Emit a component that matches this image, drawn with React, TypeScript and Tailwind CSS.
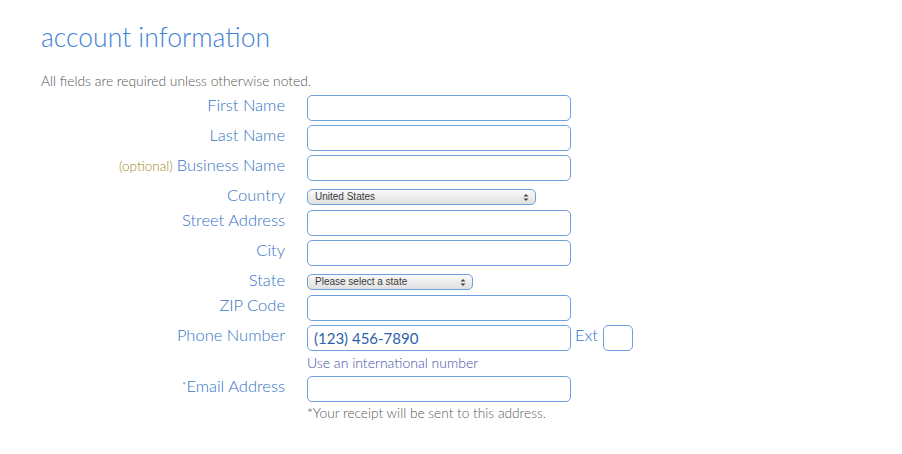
import React from 'react'

const font = { fontFamily: 'Lato, "Open Sans", sans-serif' }

function Label({ children, optional }: { children: React.ReactNode; optional?: boolean }) {
  return (
    <div className="w-[244px] shrink-0 text-right text-[16.5px] leading-[20px] font-light text-[#3474c6]">
      {optional && <span className="mr-1 text-[13.5px] text-[#9c8d22]">(optional)</span>}
      {children}
    </div>
  )
}

function TextRow({ label, optional, value, children }: { label: React.ReactNode; optional?: boolean; value?: string; children?: React.ReactNode }) {
  return (
    <div className="flex items-start gap-[22px] mb-[4px]">
      <Label optional={optional}>{label}</Label>
      <div className="flex items-start">
        <input
          readOnly
          value={value ?? ''}
          className="w-[264px] h-[26px] rounded-[5px] border border-[#6f9fdc] bg-white px-[6px] text-[15px] text-[#2f62aa] outline-none"
          style={font}
        />
        {children}
      </div>
    </div>
  )
}

function SelectRow({ label, value, width }: { label: string; value: string; width: string }) {
  return (
    <div className="flex items-start gap-[22px] mb-[4px] h-[21px]">
      <Label>{label}</Label>
      <div
        className={`${width} mt-[4px] h-[16px] rounded-[5px] border border-[#6f9fdc] bg-gradient-to-b from-[#fafafa] to-[#e0e0e0] flex items-center justify-between pl-[7px] pr-[6px]`}
      >
        <span className="text-[10px] leading-none text-[#3a3a3a]" style={{ fontFamily: '"Liberation Sans", Arial, sans-serif' }}>
          {value}
        </span>
        <svg width="6" height="9" viewBox="0 0 6 9">
          <path d="M0.5 3.5 L3 1 L5.5 3.5 Z" fill="#444" />
          <path d="M0.5 5.5 L3 8 L5.5 5.5 Z" fill="#444" />
        </svg>
      </div>
    </div>
  )
}

export default function App() {
  return (
    <div className="w-[902px] h-[454px] bg-white pl-[41px] pt-[19px]" style={font}>
      <h1 className="text-[26.5px] leading-[36px] font-light text-[#3f82d6]">account information</h1>
      <p className="mt-[18px] text-[13.8px] leading-[16px] font-light text-[#555]">All fields are required unless otherwise noted.</p>

      <div className="mt-[6px]">
        <TextRow label="First Name" />
        <TextRow label="Last Name" />
        <TextRow label="Business Name" optional />
        <SelectRow label="Country" value="United States" width="w-[229px]" />
        <TextRow label="Street Address" />
        <TextRow label="City" />
        <SelectRow label="State" value="Please select a state" width="w-[166px]" />
        <TextRow label="ZIP Code" />
        <TextRow label="Phone Number" value="(123) 456-7890">
          <span className="ml-[4px] text-[16.5px] leading-[20px] font-light text-[#3474c6]">Ext</span>
          <input readOnly className="ml-[5px] w-[30px] h-[26px] rounded-[5px] border border-[#6f9fdc] bg-white outline-none" />
        </TextRow>
        <div className="ml-[266px] -mt-[2px] mb-[3px] text-[14px] leading-[20px] font-light text-[#3f4fa8]">Use an international number</div>
        <TextRow label={<><span className="text-[11px] align-top">*</span>Email Address</>} />
        <div className="ml-[266px] -mt-[2px] text-[13.7px] leading-[18px] font-light text-[#5a5a5a]">*Your receipt will be sent to this address.</div>
      </div>
    </div>
  )
}
